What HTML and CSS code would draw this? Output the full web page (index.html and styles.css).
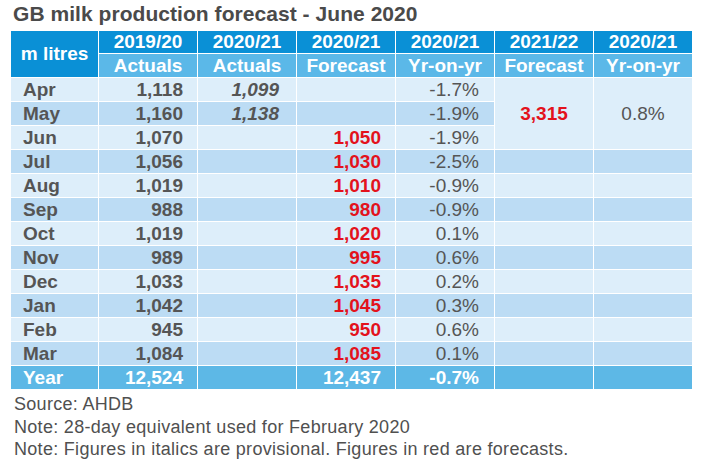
FILE: index.html
```
<!DOCTYPE html>
<html>
<head>
<meta charset="utf-8">
<link rel="stylesheet" href="styles.css">
</head>
<body>
<div class="page">
  <h1 class="title">GB milk production forecast - June 2020</h1>
  <table class="milk">
    <colgroup>
      <col class="c-label"><col><col><col><col><col><col>
    </colgroup>
    <thead>
      <tr class="h1">
        <th rowspan="2" class="unit">m litres</th>
        <th>2019/20</th><th>2020/21</th><th>2020/21</th><th>2020/21</th><th>2021/22</th><th>2020/21</th>
      </tr>
      <tr class="h2">
        <th>Actuals</th><th>Actuals</th><th>Forecast</th><th>Yr-on-yr</th><th>Forecast</th><th>Yr-on-yr</th>
      </tr>
    </thead>
    <tbody>
      <tr class="light"><td class="lbl">Apr</td><td class="num">1,118</td><td class="num it">1,099</td><td></td><td class="pct">-1.7%</td><td rowspan="3" class="big red">3,315</td><td rowspan="3" class="mid">0.8%</td></tr>
      <tr class="dark"><td class="lbl">May</td><td class="num">1,160</td><td class="num it">1,138</td><td></td><td class="pct">-1.9%</td></tr>
      <tr class="light"><td class="lbl">Jun</td><td class="num">1,070</td><td></td><td class="num red">1,050</td><td class="pct">-1.9%</td></tr>
      <tr class="dark"><td class="lbl">Jul</td><td class="num">1,056</td><td></td><td class="num red">1,030</td><td class="pct">-2.5%</td><td></td><td></td></tr>
      <tr class="light"><td class="lbl">Aug</td><td class="num">1,019</td><td></td><td class="num red">1,010</td><td class="pct">-0.9%</td><td></td><td></td></tr>
      <tr class="dark"><td class="lbl">Sep</td><td class="num">988</td><td></td><td class="num red">980</td><td class="pct">-0.9%</td><td></td><td></td></tr>
      <tr class="light"><td class="lbl">Oct</td><td class="num">1,019</td><td></td><td class="num red">1,020</td><td class="pct">0.1%</td><td></td><td></td></tr>
      <tr class="dark"><td class="lbl">Nov</td><td class="num">989</td><td></td><td class="num red">995</td><td class="pct">0.6%</td><td></td><td></td></tr>
      <tr class="light"><td class="lbl">Dec</td><td class="num">1,033</td><td></td><td class="num red">1,035</td><td class="pct">0.2%</td><td></td><td></td></tr>
      <tr class="dark"><td class="lbl">Jan</td><td class="num">1,042</td><td></td><td class="num red">1,045</td><td class="pct">0.3%</td><td></td><td></td></tr>
      <tr class="light"><td class="lbl">Feb</td><td class="num">945</td><td></td><td class="num red">950</td><td class="pct">0.6%</td><td></td><td></td></tr>
      <tr class="dark"><td class="lbl">Mar</td><td class="num">1,084</td><td></td><td class="num red">1,085</td><td class="pct">0.1%</td><td></td><td></td></tr>
      <tr class="year"><td class="lbl">Year</td><td class="num">12,524</td><td></td><td class="num">12,437</td><td class="pct">-0.7%</td><td></td><td></td></tr>
    </tbody>
  </table>
  <div class="notes">
    <p>Source: AHDB</p>
    <p>Note: 28-day equivalent used for February 2020</p>
    <p>Note: Figures in italics are provisional. Figures in red are forecasts.</p>
  </div>
</div>
</body>
</html>
```
FILE: styles.css
```
html, body {
  margin: 0;
  padding: 0;
  background: #ffffff;
}
.page {
  padding: 2px 11px 0 10px;
  font-family: "Liberation Sans", Arial, sans-serif;
  color: #555555;
}
.title {
  margin: 0 0 4px 3px;
  font-size: 21px;
  line-height: 24px;
  letter-spacing: 0.05px;
  font-weight: bold;
  color: #4a4a4a;
}
.milk {
  border-collapse: collapse;
  table-layout: fixed;
  width: 682px;
  font-size: 19px;
}
.milk col { width: 99px; }
.milk col.c-label { width: 88px; }
.milk th, .milk td {
  border: 1px solid #ffffff;
  padding: 0;
  height: 23px;
  line-height: 20px;
}
.milk th {
  color: #ffffff;
  font-weight: bold;
  text-align: center;
}
.h1 th { background: #0a90d6; height: 22px; }
.h2 th { background: #5bb8e8; }
.milk th.unit { background: #0a90d6; }
.light td { background: #ddeefa; }
.dark td { background: #bcdcf4; }
.year td { background: #5db8e6; color: #ffffff; font-weight: bold; }
.milk td.lbl {
  font-weight: bold;
  text-align: left;
  padding-left: 12px;
}
.milk td.num {
  font-weight: bold;
  text-align: right;
  padding-right: 14px;
}
.milk td.it { font-style: italic; padding-right: 17px; }
.milk td.pct {
  text-align: right;
  padding-right: 15px;
}
.year td.pct { font-weight: bold; }
.milk td.red { color: #e3121c; }
.milk td.big {
  background: #ddeefa;
  font-weight: bold;
  text-align: center;
}
.milk td.mid {
  background: #ddeefa;
  text-align: center;
}
.notes {
  margin-top: 3px;
  padding-left: 4px;
  font-size: 18px;
  line-height: 22.5px;
  letter-spacing: 0.3px;
  color: #505050;
}
.notes p { margin: 0; }
```
